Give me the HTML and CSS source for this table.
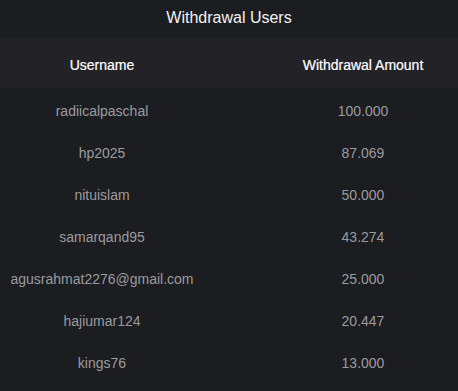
FILE: index.html
```html
<!DOCTYPE html>
<html lang="en">

<head>
    <meta charset="UTF-8">
    <title>Withdrawal Users</title>
    <link rel="stylesheet" href="styles.css">
</head>

<body>
    <div class="panel">
        <h3 class="title">Withdrawal Users</h3>
        <table class="users">
            <thead>
                <tr>
                    <th class="name">Username</th>
                    <th class="amount">Withdrawal Amount</th>
                </tr>
            </thead>
            <tbody>
                <tr><td class="name">radiicalpaschal</td><td class="amount">100.000</td></tr>
                <tr><td class="name">hp2025</td><td class="amount">87.069</td></tr>
                <tr><td class="name">nituislam</td><td class="amount">50.000</td></tr>
                <tr><td class="name">samarqand95</td><td class="amount">43.274</td></tr>
                <tr><td class="name">agusrahmat2276@gmail.com</td><td class="amount">25.000</td></tr>
                <tr><td class="name">hajiumar124</td><td class="amount">20.447</td></tr>
                <tr><td class="name">kings76</td><td class="amount">13.000</td></tr>
            </tbody>
        </table>
    </div>
</body>

</html>
```

FILE: styles.css
```css
* {
    padding: 0;
    margin: 0;
    box-sizing: border-box;
}

body {
    background-color: #1c1d21;
    font-family: "Liberation Sans", Arial, sans-serif;
}

.panel {
    width: 458px;
}

.title {
    height: 38px;
    line-height: 36px;
    text-align: center;
    font-size: 16px;
    font-weight: normal;
    color: #f2f2f2;
}

.users {
    width: 100%;
    border-collapse: collapse;
}

.users thead tr {
    background-color: #232327;
}

.users th {
    height: 50px;
    padding-top: 3px;
    font-size: 14px;
    font-weight: normal;
    color: #ffffff;
    -webkit-text-stroke: 0.2px #ffffff;
}

.users td {
    height: 42px;
    padding-top: 4px;
    font-size: 14px;
    color: #9a9b9e;
}

.users .name {
    width: 204px;
    text-align: center;
}

.users .amount {
    text-align: center;
    padding-left: 64px;
}
```
